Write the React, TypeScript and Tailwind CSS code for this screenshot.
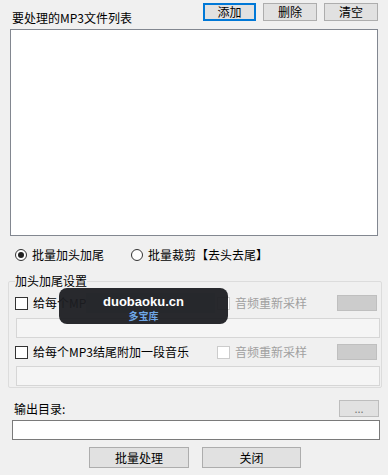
import React from "react";

const btn = "h-[18px] border border-[#adadad] bg-[#e1e1e1] text-[12px] leading-[16px] text-black flex items-center justify-center";

function Radio({ checked, label, className }: { checked: boolean; label: string; className?: string }) {
    return (
        <div className={"flex items-center " + (className ?? "")}>
            <span className="w-[12px] h-[12px] rounded-full border border-[#333] bg-white flex items-center justify-center">
                {checked && <span className="w-[6px] h-[6px] rounded-full bg-[#222]" />}
            </span>
            <span className="ml-[5px] text-[12px] leading-[14px]">{label}</span>
        </div>
    );
}

function Check({ label, disabled, className }: { label: string; disabled?: boolean; className?: string }) {
    return (
        <div className={"flex items-center " + (className ?? "")}>
            <span className={"w-[13px] h-[13px] border bg-white shrink-0 " + (disabled ? "border-[#cccccc]" : "border-[#333]")} />
            <span className={"ml-[5px] text-[12px] leading-[14px] whitespace-nowrap " + (disabled ? "text-[#a0a0a0]" : "text-black")}>{label}</span>
        </div>
    );
}

function SettingRow({ label }: { label: string }) {
    return (
        <div className="flex items-center h-[16px]">
            <Check label={label} className="ml-[6px] w-[202px]" />
            <Check label="音频重新采样" disabled />
            <div className="ml-auto mr-[4px] w-[40px] h-[16px] bg-[#cccccc] border border-[#bfbfbf]" />
        </div>
    );
}

export default function App() {
    return (
        <div className="relative w-[388px] h-[475px] bg-[#f0f0f0] text-black font-['Noto_Sans_CJK_SC',sans-serif] overflow-hidden">
            {/* header */}
            <div className="flex h-[29px]">
                <span className="ml-[12px] mt-[11px] text-[12px] leading-[14px]">要处理的MP3文件列表</span>
                <div className="ml-auto mr-[10px] mt-[3px] flex gap-[7px]">
                    <div className={btn + " w-[53px] !border-[#0078d7] border-2"}>添加</div>
                    <div className={btn + " w-[54px]"}>删除</div>
                    <div className={btn + " w-[54px]"}>清空</div>
                </div>
            </div>
            <div className="mx-[10px] h-[207px] border border-[#828790] bg-white" />

            {/* mode */}
            <div className="flex mt-[13px] h-[12px]">
                <Radio checked label="批量加头加尾" className="ml-[15px]" />
                <Radio checked={false} label="批量裁剪【去头去尾】" className="ml-[27px]" />
            </div>

            {/* group */}
            <fieldset className="ml-[8px] mt-[13px] w-[374px] h-[114px] border border-[#dcdcdc] rounded-[2px]">
                <legend className="ml-[6px] text-[12px] leading-[14px]">加头加尾设置</legend>
                <div className="mt-[7px]">
                    <SettingRow label="给每个MP3开头附加一段音乐" />
                </div>
                <div className="ml-[7px] mr-[1px] mt-[7px] h-[20px] border border-[#d6d6d6] bg-[#f5f5f5]" />
                <div className="mt-[6px]">
                    <SettingRow label="给每个MP3结尾附加一段音乐" />
                </div>
                <div className="ml-[7px] mr-[1px] mt-[6px] h-[20px] border border-[#d6d6d6] bg-[#f5f5f5]" />
            </fieldset>

            {/* output */}
            <div className="flex items-center mt-[12px] h-[17px]">
                <span className="ml-[14px] text-[12px] leading-[14px]">输出目录:</span>
                <div className="ml-auto mr-[9px] w-[40px] h-[17px] border border-[#bdbdbd] bg-[#e1e1e1] text-[11px] leading-[14px] text-[#777] text-center">...</div>
            </div>
            <div className="ml-[12px] mr-[8px] mt-[3px] h-[20px] border border-[#7a7a7a] bg-white" />
            <div className="flex mt-[7px]">
                <div className={btn + " ml-[89px] w-[100px] h-[21px]"}>批量处理</div>
                <div className={btn + " ml-[13px] w-[99px] h-[21px]"}>关闭</div>
            </div>

            {/* watermark */}
            <div className="absolute left-[59px] top-[288px] w-[169px] h-[36px] rounded-[8px] bg-[#1c1e22]/95 flex flex-col items-center">
                <div className="absolute left-[27px] top-[5px] w-[129px] h-[20px] bg-[#26282c]" />
                <span className="relative mt-[6px] text-[13px] leading-[15px] font-bold text-white font-['Liberation_Sans',sans-serif]">duobaoku.cn</span>
                <span className="relative mt-[1px] text-[10px] leading-[12px] text-[#6ea6e6] font-bold">多宝库</span>
            </div>
        </div>
    );
}
